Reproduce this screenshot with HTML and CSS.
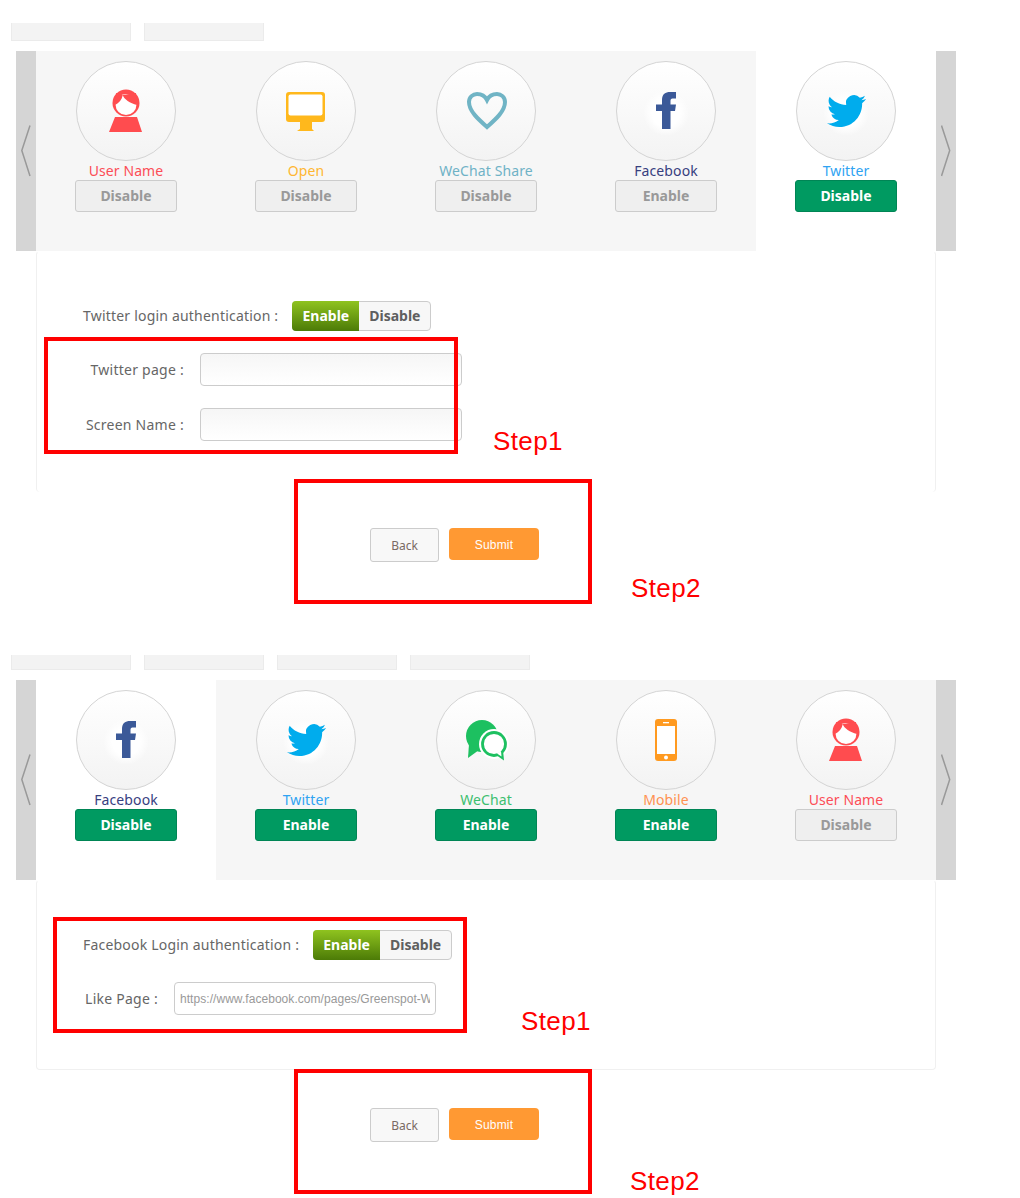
FILE: index.html
```html
<!DOCTYPE html>
<html lang="en">
<head>
    <meta charset="UTF-8">
    <meta name="viewport" content="width=device-width, initial-scale=1.0">
    <title>Login Settings</title>
    <link rel="stylesheet" href="styles.css">
</head>
<body>
    <!-- icons shared by both sliders -->
    <svg class="sprite" aria-hidden="true">
        <defs>
            <radialGradient id="glow">
                <stop offset="0.6" stop-color="#ffffff"></stop>
                <stop offset="1" stop-color="#ffffff" stop-opacity="0"></stop>
            </radialGradient>
        </defs>
        <symbol id="i-user" viewBox="0 0 100 100">
            <circle cx="50" cy="42" r="13.5" fill="#ff4c4f"></circle>
            <circle cx="50" cy="43.500" r="10.500" fill="#ffffff"></circle>
            <path d="M39 44C43 42 46 38.500 46.800 34L40 32ZM46.800 34C48 38.500 54 42 61 44L60 32Z" fill="#ff4c4f"></path>
            <path d="M39 56H61L66 71H33Z" fill="#ff4c4f"></path>
        </symbol>
        <symbol id="i-monitor" viewBox="0 0 100 100">
            <rect x="30" y="31" width="39" height="30" rx="3" fill="#ffb81c"></rect>
            <rect x="32.500" y="33.500" width="34" height="21" rx="2" fill="#ffffff"></rect>
            <path d="M44 61H56V68L58 70H41L44 68Z" fill="#ffb81c"></path>
        </symbol>
        <symbol id="i-heart" viewBox="0 0 100 100">
            <path d="M51 66C42 58 33 50 33 41C33 36 37 33 41 33C45 33 49 35 51 39C53 35 57 33 61 33C65 33 69 36 69 41C69 50 60 58 51 66Z" fill="none" stroke="#70b4c5" stroke-width="4"></path>
        </symbol>
        <symbol id="i-facebook" viewBox="0 0 100 100">
            <circle cx="50" cy="52" r="23" fill="url(#glow)"></circle>
            <path d="M46 68V50H40V43.500H46V39C46 33 49.500 31 54 31H60V37.500H56.500C55 37.500 54.500 38.500 54.500 40V43.500H60L59 50H54.500V68Z" fill="#3b5998"></path>
        </symbol>
        <symbol id="i-twitter" viewBox="0 0 100 100">
            <circle cx="50" cy="52" r="23" fill="url(#glow)"></circle>
            <path transform="translate(31 30.500) scale(1.630)" d="M23.953 4.570a10 10 0 01-2.825.775 4.958 4.958 0 002.163-2.723c-.951.555-2.005.959-3.127 1.184a4.920 4.920 0 00-8.384 4.482C7.690 8.095 4.067 6.130 1.640 3.162a4.822 4.822 0 00-.666 2.475c0 1.710.870 3.213 2.188 4.096a4.904 4.904 0 01-2.228-.616v.060a4.923 4.923 0 003.946 4.827 4.996 4.996 0 01-2.212.085 4.936 4.936 0 004.604 3.417 9.867 9.867 0 01-6.102 2.105c-.390 0-.779-.023-1.170-.067a13.995 13.995 0 007.557 2.209c9.053 0 13.998-7.496 13.998-13.985 0-.210 0-.420-.015-.630A9.935 9.935 0 0024 4.590z" fill="#00aced"></path>
        </symbol>
        <symbol id="i-wechat" viewBox="0 0 100 100">
            <circle cx="46" cy="46" r="16" fill="#1dc060"></circle>
            <path d="M33 54L32 68L43 60Z" fill="#1dc060"></path>
            <circle cx="58" cy="54" r="15" fill="#ffffff"></circle>
            <circle cx="58" cy="54" r="11.500" fill="#ffffff" stroke="#1dc060" stroke-width="2.800"></circle>
            <path d="M60 65L68 70.500L67 60Z" fill="#1dc060"></path>
            <path d="M61 63.500L65.500 66.500L65 61Z" fill="#ffffff"></path>
        </symbol>
        <symbol id="i-phone" viewBox="0 0 100 100">
            <rect x="39" y="29" width="22" height="42" rx="3" fill="#ff9a20"></rect>
            <rect x="41" y="36" width="18" height="28" fill="#ffffff"></rect>
            <rect x="47" y="32" width="6" height="1.300" fill="#ffffff"></rect>
            <circle cx="50" cy="67.500" r="2" fill="#ffffff"></circle>
        </symbol>
        <symbol id="i-prev" viewBox="0 0 10 52">
            <path d="M9 0.500L0.800 25.500L9 51" fill="none" stroke="#999999" stroke-width="1.500"></path>
        </symbol>
        <symbol id="i-next" viewBox="0 0 10 52">
            <path d="M0.500 0.500L8.700 25.500L0.500 51" fill="none" stroke="#999999" stroke-width="1.500"></path>
        </symbol>
    </svg>

    <div class="page">
        <section class="config config-twitter">
            <div class="tabs">
                <span class="tab"></span>
                <span class="tab"></span>
            </div>
            <div class="slider">
                <div class="arrow"><svg class="chevron"><use href="#i-prev"></use></svg></div>
                <div class="item">
                    <div class="circle"><svg class="icon"><use href="#i-user"></use></svg></div>
                    <div class="name c-user">User Name</div>
                    <button type="button" class="state">Disable</button>
                </div>
                <div class="item">
                    <div class="circle"><svg class="icon"><use href="#i-monitor"></use></svg></div>
                    <div class="name c-open">Open</div>
                    <button type="button" class="state">Disable</button>
                </div>
                <div class="item">
                    <div class="circle"><svg class="icon"><use href="#i-heart"></use></svg></div>
                    <div class="name c-share">WeChat Share</div>
                    <button type="button" class="state">Disable</button>
                </div>
                <div class="item">
                    <div class="circle"><svg class="icon"><use href="#i-facebook"></use></svg></div>
                    <div class="name c-facebook">Facebook</div>
                    <button type="button" class="state">Enable</button>
                </div>
                <div class="item active">
                    <div class="circle"><svg class="icon"><use href="#i-twitter"></use></svg></div>
                    <div class="name c-twitter">Twitter</div>
                    <button type="button" class="state on">Disable</button>
                </div>
                <div class="arrow"><svg class="chevron"><use href="#i-next"></use></svg></div>
            </div>
            <div class="panel panel-open">
                <div class="row">
                    <span class="row-title">Twitter login authentication :</span>
                    <div class="toggle">
                        <span class="toggle-on">Enable</span>
                        <span class="toggle-off">Disable</span>
                    </div>
                </div>
                <div class="row">
                    <label class="field-label wide">Twitter page :</label>
                    <input type="text" class="field">
                </div>
                <div class="row">
                    <label class="field-label wide">Screen Name :</label>
                    <input type="text" class="field">
                </div>
            </div>
            <div class="actions">
                <button type="button" class="btn-back">Back</button>
                <button type="button" class="btn-submit">Submit</button>
            </div>
        </section>

        <section class="config config-facebook">
            <div class="tabs tabs-cut">
                <span class="tab"></span>
                <span class="tab"></span>
                <span class="tab"></span>
                <span class="tab"></span>
            </div>
            <div class="slider">
                <div class="arrow"><svg class="chevron"><use href="#i-prev"></use></svg></div>
                <div class="item active">
                    <div class="circle"><svg class="icon"><use href="#i-facebook"></use></svg></div>
                    <div class="name c-facebook">Facebook</div>
                    <button type="button" class="state on">Disable</button>
                </div>
                <div class="item">
                    <div class="circle"><svg class="icon"><use href="#i-twitter"></use></svg></div>
                    <div class="name c-twitter">Twitter</div>
                    <button type="button" class="state on">Enable</button>
                </div>
                <div class="item">
                    <div class="circle"><svg class="icon"><use href="#i-wechat"></use></svg></div>
                    <div class="name c-wechat">WeChat</div>
                    <button type="button" class="state on">Enable</button>
                </div>
                <div class="item">
                    <div class="circle"><svg class="icon"><use href="#i-phone"></use></svg></div>
                    <div class="name c-mobile">Mobile</div>
                    <button type="button" class="state on">Enable</button>
                </div>
                <div class="item">
                    <div class="circle"><svg class="icon"><use href="#i-user"></use></svg></div>
                    <div class="name c-user">User Name</div>
                    <button type="button" class="state">Disable</button>
                </div>
                <div class="arrow"><svg class="chevron"><use href="#i-next"></use></svg></div>
            </div>
            <div class="panel panel-closed">
                <div class="row">
                    <span class="row-title">Facebook Login authentication :</span>
                    <div class="toggle">
                        <span class="toggle-on">Enable</span>
                        <span class="toggle-off">Disable</span>
                    </div>
                </div>
                <div class="row">
                    <label class="field-label">Like Page :</label>
                    <input type="text" class="field plain" value="https://www.facebook.com/pages/Greenspot-Wellness">
                </div>
            </div>
            <div class="actions">
                <button type="button" class="btn-back">Back</button>
                <button type="button" class="btn-submit">Submit</button>
            </div>
        </section>

        <!-- red notes drawn on top of the screenshot -->
        <div class="mark mark-1a"></div>
        <div class="mark mark-1b"></div>
        <div class="mark mark-2a"></div>
        <div class="mark mark-2b"></div>
        <span class="step step-1a">Step1</span>
        <span class="step step-1b">Step2</span>
        <span class="step step-2a">Step1</span>
        <span class="step step-2b">Step2</span>
    </div>
</body>
</html>
```

FILE: styles.css
```css
body {
    margin: 0;
    background-color: #ffffff;
    color: #666666;
    font-family: "Noto Sans", Arial, sans-serif;
    font-size: 14px;
}

.sprite {
    position: absolute;
    width: 0;
    height: 0;
}

.page {
    position: relative;
    height: 1198px;
    overflow: hidden;
}

.config-twitter {
    padding-top: 23px;
}

.config-facebook {
    padding-top: 93px;
}

.tabs {
    display: flex;
    gap: 13px;
    height: 18px;
    margin-left: 11px;
    margin-bottom: 10px;
}

.tabs-cut {
    height: 15px;
}

.tab {
    box-sizing: border-box;
    width: 120px;
    background-color: #f3f3f3;
    border: 1px solid #ebebeb;
    border-top: none;
}

.slider {
    display: flex;
    width: 940px;
    height: 200px;
    margin-left: 16px;
    background-color: #f6f6f6;
}

.arrow {
    display: flex;
    align-items: center;
    justify-content: center;
    width: 20px;
    background-color: #d5d5d5;
}

.chevron {
    width: 10px;
    height: 52px;
}

.item {
    display: flex;
    flex-direction: column;
    align-items: center;
    width: 180px;
    padding-top: 10px;
}

.item.active {
    background-color: #ffffff;
}

.circle {
    box-sizing: border-box;
    width: 100px;
    height: 100px;
    border: 1px solid #d4d4d4;
    border-radius: 50%;
    background: linear-gradient(#ffffff, #f3f3f3);
}

.icon {
    display: block;
    width: 100px;
    height: 100px;
    margin: -1px;
}

.name {
    height: 19px;
    line-height: 20px;
    letter-spacing: 0.1px;
    white-space: nowrap;
}

.c-user { color: #fc4d57; }
.c-open { color: #ffb632; }
.c-share { color: #6fb2c6; }
.c-facebook { color: #37407f; }
.c-twitter { color: #2fa3f2; }
.c-wechat { color: #3cbf70; }
.c-mobile { color: #ff9150; }

.state {
    box-sizing: border-box;
    width: 102px;
    height: 32px;
    padding: 0 0 2px;
    border: 1px solid #cccccc;
    border-radius: 3px;
    background-color: #efefef;
    color: #999999;
    font-family: inherit;
    font-size: 14px;
    font-weight: bold;
}

.state.on {
    background-color: #009a61;
    border-color: #008555;
    color: #ffffff;
}

.panel {
    box-sizing: border-box;
    width: 900px;
    margin-left: 36px;
    padding-top: 49px;
    border: 1px solid #f0f0f0;
    border-top-color: transparent;
    border-radius: 4px;
}

.panel-open {
    height: 241px;
    border-bottom: none;
}

.panel-closed {
    height: 190px;
}

.row {
    display: flex;
    align-items: center;
    margin-bottom: 22px;
    padding-left: 46px;
}

.row-title {
    margin-right: 14px;
    padding-bottom: 1px;
    letter-spacing: 0.2px;
    white-space: nowrap;
}

.field-label {
    width: 75px;
    margin-right: 16px;
    letter-spacing: 0.25px;
    text-align: right;
    white-space: nowrap;
}

.field-label.wide {
    width: 101px;
}

.toggle {
    box-sizing: border-box;
    display: flex;
    width: 139px;
    height: 30px;
    border: 1px solid #cccccc;
    border-radius: 4px;
    background-color: #f7f7f7;
    font-weight: bold;
    line-height: 27px;
    text-align: center;
}

.toggle-on {
    width: 67px;
    margin: -1px 0 -1px -1px;
    background: linear-gradient(#8fc31f, #4c7b07);
    border-radius: 4px 0 0 4px;
    color: #ffffff;
    line-height: 29px;
}

.toggle-off {
    flex: 1;
    color: #5f5f5f;
}

.field {
    box-sizing: border-box;
    width: 262px;
    height: 33px;
    padding: 0 5px;
    border: 1px solid #cccccc;
    border-radius: 4px;
    background: linear-gradient(#f6f6f6, #ffffff);
    color: #999999;
    font-family: "Liberation Sans", Arial, sans-serif;
    font-size: 12px;
    letter-spacing: 0.05px;
}

.field.plain {
    background: #ffffff;
}

.actions {
    display: flex;
    align-items: flex-start;
    gap: 10px;
    padding-left: 370px;
    margin-top: 36px;
}

.config-facebook .actions {
    margin-top: 38px;
}

.btn-back {
    box-sizing: border-box;
    width: 69px;
    height: 34px;
    border: 1px solid #cccccc;
    border-radius: 3px;
    background-color: #f8f8f8;
    color: #7a6a64;
    font-family: inherit;
    font-size: 12px;
}

.btn-submit {
    width: 90px;
    height: 32px;
    padding: 1px 0 0;
    border: none;
    border-radius: 4px;
    background-color: #ff9933;
    color: #ffffff;
    font-family: "Liberation Sans", Arial, sans-serif;
    font-size: 12px;
    letter-spacing: 0.2px;
}

.mark {
    position: absolute;
    box-sizing: border-box;
    border: 4px solid #ff0000;
}

.mark-1a { left: 44px; top: 337px; width: 414px; height: 117px; }
.mark-1b { left: 294px; top: 479px; width: 298px; height: 125px; }
.mark-2a { left: 53px; top: 917px; width: 414px; height: 116px; }
.mark-2b { left: 294px; top: 1069px; width: 298px; height: 125px; }

.step {
    position: absolute;
    color: #ff0000;
    font-family: "Liberation Sans", Arial, sans-serif;
    font-size: 26px;
    letter-spacing: 0.4px;
    line-height: 28px;
}

.step-1a { left: 493px; top: 427px; }
.step-1b { left: 631px; top: 574px; }
.step-2a { left: 521px; top: 1007px; }
.step-2b { left: 630px; top: 1167px; }
```
